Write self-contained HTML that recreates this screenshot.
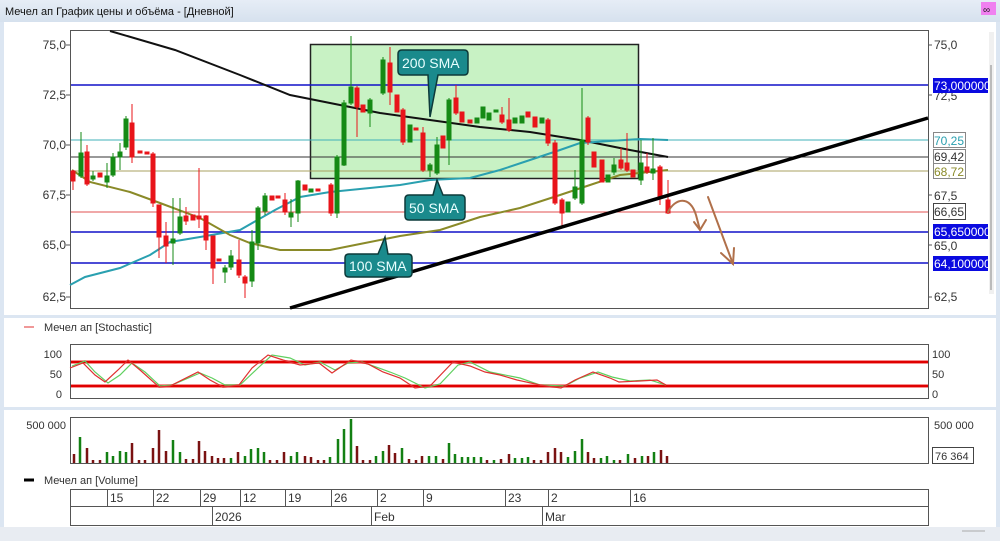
<!DOCTYPE html>
<html><head><meta charset="utf-8"><style>
html,body{margin:0;padding:0;width:1000px;height:541px;overflow:hidden;background:#fff;font-family:"Liberation Sans","DejaVu Sans",sans-serif}
</style></head><body>
<svg width="1000" height="541" viewBox="0 0 1000 541" xmlns="http://www.w3.org/2000/svg" font-family="Liberation Sans, DejaVu Sans, sans-serif">
<defs><linearGradient id="tb" x1="0" y1="0" x2="0" y2="1"><stop offset="0" stop-color="#e6edf6"/><stop offset="1" stop-color="#d6e1ee"/></linearGradient></defs>
<rect x="0" y="0" width="1000" height="541" fill="#dce6f2"/>
<rect x="0" y="0" width="1000" height="22" fill="url(#tb)"/>
<text x="5" y="15" font-size="11" fill="#111">Мечел ап График цены и объёма - [Дневной]</text>
<rect x="981" y="2" width="15" height="13" fill="#f080f0"/>
<text x="983" y="13" font-size="10" fill="#222">&#x221E;</text>
<rect x="4" y="22" width="992" height="505" fill="#fff"/>
<rect x="0" y="527" width="1000" height="14" fill="#e8ecf2"/>
<line x1="962" y1="531" x2="985" y2="531" stroke="#aaa"/>

<!-- main plot frame -->
<rect x="70.5" y="30.5" width="858" height="278" fill="#fff" stroke="#555"/>
<rect x="310.5" y="44.5" width="328" height="134" fill="#c8f2c4" stroke="#222" stroke-width="1.5"/>
<!-- horizontal levels -->
<g stroke-width="1.5">
<line x1="71" y1="85" x2="928" y2="85" stroke="#1010c8"/>
<line x1="71" y1="140" x2="928" y2="140" stroke="#40b0b8" stroke-width="1"/>
<line x1="71" y1="157" x2="928" y2="157" stroke="#333" stroke-width="1"/>
<line x1="71" y1="171" x2="928" y2="171" stroke="#a8a060" stroke-width="1"/>
<line x1="71" y1="212" x2="928" y2="212" stroke="#e05050" stroke-width="1"/>
<line x1="71" y1="232" x2="928" y2="232" stroke="#1010c8"/>
<line x1="71" y1="263" x2="928" y2="263" stroke="#1010c8"/>
</g>
<!-- MAs -->
<polyline fill="none" stroke="#111" stroke-width="2" points="110,31 175,50 240,75 290,95 330,103 380,113 430,120 480,127 530,132 580,140 630,150 668,157"/>
<polyline fill="none" stroke="#2aa0b0" stroke-width="2" points="70,285 85,277 120,268 150,255 170,242 200,237 240,230 275,210 300,197 330,192 370,188 400,185 430,180 470,178 500,170 530,160 560,150 580,143 610,141 640,139 668,140"/>
<polyline fill="none" stroke="#8a8a28" stroke-width="2" points="72,170 90,182 130,192 160,203 200,218 230,235 250,243 280,250 330,250 360,244 400,236 440,230 480,217 520,208 560,195 590,185 620,175 668,170"/>

<!-- candles -->
<g stroke-width="1">
<g stroke="#e8141a" fill="#e8141a">
<line x1="73" y1="170" x2="73" y2="190"/><rect x="71" y="171" width="4" height="10"/>
<line x1="87" y1="145" x2="87" y2="186"/><rect x="85" y="152" width="4" height="32"/>
<rect x="98" y="173" width="4" height="4"/>
<line x1="132" y1="104" x2="132" y2="163"/><rect x="130" y="123" width="4" height="34"/>
<rect x="138" y="151" width="4" height="2"/><rect x="145" y="152" width="4" height="2"/>
<line x1="153" y1="152" x2="153" y2="207"/><rect x="151" y="154" width="4" height="49"/>
<line x1="159" y1="205" x2="159" y2="258"/><rect x="157" y="205" width="4" height="32"/>
<line x1="166" y1="222" x2="166" y2="263"/><rect x="164" y="236" width="4" height="10"/>
<line x1="186" y1="207" x2="186" y2="225"/><rect x="184" y="216" width="4" height="5"/>
<rect x="191" y="215" width="4" height="5"/>
<line x1="199" y1="168" x2="199" y2="228"/><rect x="197" y="216" width="4" height="3"/>
<line x1="206" y1="215" x2="206" y2="250"/><rect x="204" y="216" width="4" height="24"/>
<line x1="213" y1="236" x2="213" y2="284"/><rect x="211" y="236" width="4" height="32"/>
<rect x="217" y="259" width="4" height="2"/>
<line x1="239" y1="240" x2="239" y2="278"/><rect x="237" y="260" width="4" height="15"/>
<line x1="245" y1="275" x2="245" y2="298"/><rect x="243" y="277" width="4" height="6"/>
<rect x="270" y="196" width="4" height="4"/><rect x="276" y="196" width="4" height="2"/>
<line x1="285" y1="193" x2="285" y2="215"/><rect x="283" y="200" width="4" height="12"/>
<rect x="303" y="185" width="4" height="5"/><rect x="316" y="189" width="4" height="2"/>
<line x1="331" y1="183" x2="331" y2="216"/><rect x="329" y="185" width="4" height="28"/>
<line x1="357" y1="86" x2="357" y2="137"/><rect x="355" y="88" width="4" height="19"/>
<rect x="361" y="105" width="4" height="7"/>
<line x1="390" y1="47" x2="390" y2="105"/><rect x="388" y="63" width="4" height="29"/>
<rect x="395" y="95" width="4" height="17"/>
<line x1="403" y1="108" x2="403" y2="145"/><rect x="401" y="110" width="4" height="32"/>
<rect x="414" y="128" width="4" height="2"/>
<line x1="423" y1="127" x2="423" y2="172"/><rect x="421" y="133" width="4" height="37"/>
<rect x="441" y="136" width="4" height="12"/>
<line x1="456" y1="85" x2="456" y2="115"/><rect x="454" y="98" width="4" height="15"/>
<rect x="460" y="112" width="4" height="10"/><rect x="468" y="120" width="4" height="3"/>
<line x1="502" y1="107" x2="502" y2="124"/><rect x="500" y="115" width="4" height="7"/>
<line x1="509" y1="98" x2="509" y2="132"/><rect x="507" y="120" width="4" height="10"/>
<rect x="526" y="112" width="4" height="5"/><rect x="533" y="117" width="4" height="10"/>
<line x1="548" y1="118" x2="548" y2="146"/><rect x="546" y="120" width="4" height="23"/>
<line x1="555" y1="140" x2="555" y2="205"/><rect x="553" y="143" width="4" height="60"/>
<line x1="562" y1="198" x2="562" y2="227"/><rect x="560" y="200" width="4" height="13"/>
<line x1="588" y1="116" x2="588" y2="145"/><rect x="586" y="118" width="4" height="24"/>
<rect x="592" y="152" width="4" height="15"/>
<rect x="600" y="160" width="4" height="22"/>
<line x1="621" y1="148" x2="621" y2="170"/><rect x="619" y="160" width="4" height="8"/>
<line x1="627" y1="133" x2="627" y2="172"/><rect x="625" y="163" width="4" height="7"/>
<rect x="631" y="170" width="4" height="7"/>
<line x1="647" y1="153" x2="647" y2="174"/><rect x="645" y="167" width="4" height="5"/>
<line x1="660" y1="165" x2="660" y2="205"/><rect x="658" y="167" width="4" height="30"/>
<line x1="668" y1="180" x2="668" y2="214"/><rect x="666" y="200" width="4" height="13"/>
</g>
<g stroke="#158a15" fill="#158a15">
<line x1="81" y1="132" x2="81" y2="178"/><rect x="79" y="153" width="4" height="23"/>
<line x1="93" y1="171" x2="93" y2="181"/><rect x="91" y="176" width="4" height="3"/>
<line x1="107" y1="163" x2="107" y2="188"/><rect x="105" y="176" width="4" height="6"/>
<line x1="113" y1="153" x2="113" y2="177"/><rect x="111" y="157" width="4" height="18"/>
<line x1="120" y1="143" x2="120" y2="170"/><rect x="118" y="152" width="4" height="5"/>
<line x1="126" y1="116" x2="126" y2="150"/><rect x="124" y="119" width="4" height="28"/>
<line x1="173" y1="198" x2="173" y2="265"/><rect x="171" y="239" width="4" height="4"/>
<line x1="180" y1="198" x2="180" y2="235"/><rect x="178" y="217" width="4" height="16"/>
<line x1="225" y1="265" x2="225" y2="283"/><rect x="223" y="268" width="4" height="4"/>
<line x1="231" y1="250" x2="231" y2="270"/><rect x="229" y="256" width="4" height="11"/>
<line x1="252" y1="230" x2="252" y2="287"/><rect x="250" y="242" width="4" height="39"/>
<line x1="258" y1="206" x2="258" y2="250"/><rect x="256" y="208" width="4" height="35"/>
<line x1="265" y1="193" x2="265" y2="215"/><rect x="263" y="196" width="4" height="15"/>
<line x1="291" y1="199" x2="291" y2="227"/><rect x="289" y="213" width="4" height="4"/>
<line x1="298" y1="180" x2="298" y2="222"/><rect x="296" y="181" width="4" height="32"/>
<rect x="309" y="189" width="4" height="3"/>
<line x1="337" y1="155" x2="337" y2="218"/><rect x="335" y="157" width="4" height="56"/>
<line x1="344" y1="100" x2="344" y2="166"/><rect x="342" y="103" width="4" height="62"/>
<line x1="351" y1="36" x2="351" y2="105"/><rect x="349" y="87" width="4" height="16"/>
<line x1="370" y1="98" x2="370" y2="127"/><rect x="368" y="100" width="4" height="13"/>
<line x1="383" y1="57" x2="383" y2="95"/><rect x="381" y="60" width="4" height="33"/>
<rect x="408" y="125" width="4" height="17"/>
<line x1="430" y1="163" x2="430" y2="177"/><rect x="428" y="165" width="4" height="5"/>
<line x1="437" y1="137" x2="437" y2="175"/><rect x="435" y="145" width="4" height="28"/>
<line x1="449" y1="98" x2="449" y2="165"/><rect x="447" y="100" width="4" height="40"/>
<rect x="475" y="118" width="4" height="5"/><rect x="481" y="107" width="4" height="11"/>
<rect x="487" y="113" width="4" height="7"/><rect x="494" y="110" width="4" height="2"/>
<rect x="513" y="118" width="4" height="5"/><rect x="520" y="116" width="4" height="7"/>
<rect x="540" y="118" width="4" height="5"/>
<rect x="566" y="202" width="4" height="10"/>
<line x1="575" y1="170" x2="575" y2="200"/><rect x="573" y="187" width="4" height="11"/>
<line x1="582" y1="88" x2="582" y2="205"/><rect x="580" y="140" width="4" height="63"/>
<rect x="606" y="175" width="4" height="7"/>
<line x1="614" y1="158" x2="614" y2="175"/><rect x="612" y="165" width="4" height="7"/>
<line x1="641" y1="140" x2="641" y2="185"/><rect x="639" y="163" width="4" height="17"/>
<line x1="653" y1="138" x2="653" y2="180"/><rect x="651" y="169" width="4" height="4"/>
</g>
</g>
<!-- trend line -->
<line x1="290" y1="308" x2="928" y2="118" stroke="#000" stroke-width="3.5"/>
<!-- brown arrows -->
<g fill="none" stroke="#b0704a" stroke-width="2" stroke-linecap="round">
<path d="M668,212 C675,198 690,195 696,215 L700,230"/>
<path d="M694,222 L700,230 L706,220"/>
<path d="M708,197 L733,264"/>
<path d="M721,253 L733,264 L734,248"/>
</g>
<!-- callouts -->
<g fill="#1a8a8c" stroke="#0d3a3a" stroke-width="1.5">
<path d="M402,50 H464 Q468,50 468,54 V71 Q468,75 464,75 H438 L430,117 L428,75 H402 Q398,75 398,71 V54 Q398,50 402,50 Z"/>
<path d="M409,195 H433 L437,180 L443,195 H461 Q465,195 465,199 V216 Q465,220 461,220 H409 Q405,220 405,216 V199 Q405,195 409,195 Z"/>
<path d="M349,254 H378 L385,237 L388,254 H408 Q412,254 412,258 V273 Q412,277 408,277 H349 Q345,277 345,273 V258 Q345,254 349,254 Z"/>
</g>
<g fill="#e8ffff" font-size="14"><text x="402" y="68">200 SMA</text><text x="409" y="213">50 SMA</text><text x="349" y="271">100 SMA</text></g>

<!-- left axis -->
<g font-size="12" fill="#333" text-anchor="end">
<text x="66" y="49">75,0</text><text x="66" y="99">72,5</text><text x="66" y="149">70,0</text><text x="66" y="199">67,5</text><text x="66" y="249">65,0</text><text x="66" y="301">62,5</text>
</g>
<g stroke="#555"><line x1="66" y1="45" x2="70" y2="45"/><line x1="66" y1="95" x2="70" y2="95"/><line x1="66" y1="145" x2="70" y2="145"/><line x1="66" y1="195" x2="70" y2="195"/><line x1="66" y1="245" x2="70" y2="245"/><line x1="66" y1="297" x2="70" y2="297"/>
<line x1="928" y1="45" x2="932" y2="45"/><line x1="928" y1="95" x2="932" y2="95"/><line x1="928" y1="195" x2="932" y2="195"/><line x1="928" y1="245" x2="932" y2="245"/><line x1="928" y1="297" x2="932" y2="297"/></g>
<!-- right axis -->
<g font-size="12" fill="#333">
<text x="934" y="49">75,0</text><text x="934" y="100">72,5</text><text x="934" y="200">67,5</text><text x="934" y="250">65,0</text><text x="934" y="301">62,5</text>
</g>
<rect x="933" y="78" width="55" height="15" fill="#0a0ae0"/><text x="934" y="90" font-size="12" fill="#fff">73,000000</text>
<rect x="933" y="224" width="55" height="15" fill="#0a0ae0"/><text x="934" y="236" font-size="12" fill="#fff">65,650000</text>
<rect x="933" y="256" width="55" height="15" fill="#0a0ae0"/><text x="934" y="268" font-size="12" fill="#fff">64,100000</text>
<rect x="933.5" y="132.5" width="32" height="15" fill="#fff" stroke="#888"/><text x="934" y="145" font-size="12" fill="#2aa0b0">70,25</text>
<rect x="933.5" y="149.5" width="32" height="14" fill="#fff" stroke="#888"/><text x="934" y="161" font-size="12" fill="#333">69,42</text>
<rect x="933.5" y="163.5" width="32" height="15" fill="#fff" stroke="#888"/><text x="934" y="176" font-size="12" fill="#8a8a28">68,72</text>
<rect x="933.5" y="203.5" width="32" height="16" fill="#fff" stroke="#444"/><text x="934" y="216" font-size="12" fill="#333">66,65</text>
<rect x="989" y="32" width="5" height="262" fill="#f0f0f0"/><line x1="991" y1="65" x2="991" y2="290" stroke="#bbb" stroke-width="2"/>

<!-- separator -->
<rect x="4" y="315" width="992" height="3" fill="#dce6f2"/>
<line x1="24" y1="327" x2="34" y2="327" stroke="#e03030"/>
<text x="44" y="331" font-size="11" fill="#333">Мечел ап [Stochastic]</text>
<rect x="70.5" y="344.5" width="858" height="54" fill="#fff" stroke="#555"/>
<rect x="71" y="360" width="857" height="4" fill="#f59090"/><line x1="71" y1="362" x2="928" y2="362" stroke="#e00000" stroke-width="2"/>
<rect x="71" y="384" width="857" height="4" fill="#f59090"/><line x1="71" y1="386" x2="928" y2="386" stroke="#e00000" stroke-width="2"/>
<polyline fill="none" stroke="#60d060" stroke-width="1.2" points="72,366 85,361 95,372 108,383 120,375 132,363 145,372 160,386 172,385 200,373 212,378 225,385 240,385 258,368 272,355 290,358 305,365 320,362 335,370 348,363 362,362 390,372 405,378 425,388 440,384 458,365 470,362 490,372 520,378 540,385 565,386 580,378 598,372 612,377 630,381 650,380 666,385"/>
<polyline fill="none" stroke="#e03030" stroke-width="1.2" points="70,368 83,363 95,375 105,382 118,370 128,360 140,370 159,387 170,386 198,372 210,380 223,387 239,385 252,368 268,355 283,360 300,365 319,363 332,373 351,360 368,364 383,372 400,378 415,388 430,386 453,362 470,366 485,372 500,375 517,380 540,385 561,388 575,380 593,372 610,378 619,382 640,381 657,380 666,385"/>
<g font-size="11" fill="#333"><text x="62" y="358" text-anchor="end">100</text><text x="62" y="378" text-anchor="end">50</text><text x="62" y="398" text-anchor="end">0</text>
<text x="932" y="358">100</text><text x="932" y="378">50</text><text x="932" y="398">0</text></g>

<rect x="4" y="407" width="992" height="3" fill="#dce6f2"/>
<rect x="70.5" y="417.5" width="858" height="46" fill="#fff" stroke="#555"/>
<g font-size="11" fill="#333"><text x="66" y="429" text-anchor="end">500 000</text><text x="934" y="429">500 000</text></g>
<rect x="932.5" y="447.5" width="41" height="16" fill="#fff" stroke="#444"/><text x="935" y="460" font-size="11" fill="#333">76 364</text>
<!-- volume -->
<g stroke-width="2.5">
<g stroke="#7a1212">
<line x1="74" y1="463" x2="74" y2="454"/><line x1="87" y1="463" x2="87" y2="448"/><line x1="93" y1="463" x2="93" y2="460"/><line x1="100" y1="463" x2="100" y2="460"/><line x1="132" y1="463" x2="132" y2="443"/><line x1="139" y1="463" x2="139" y2="460"/><line x1="145" y1="463" x2="145" y2="460"/><line x1="153" y1="463" x2="153" y2="448"/><line x1="159" y1="463" x2="159" y2="430"/><line x1="166" y1="463" x2="166" y2="451"/><line x1="186" y1="463" x2="186" y2="459"/><line x1="193" y1="463" x2="193" y2="459"/><line x1="199" y1="463" x2="199" y2="441"/><line x1="205" y1="463" x2="205" y2="451"/><line x1="212" y1="463" x2="212" y2="456"/><line x1="218" y1="463" x2="218" y2="458"/><line x1="224" y1="463" x2="224" y2="458"/><line x1="238" y1="463" x2="238" y2="452"/><line x1="270" y1="463" x2="270" y2="460"/><line x1="277" y1="463" x2="277" y2="460"/><line x1="284" y1="463" x2="284" y2="452"/><line x1="305" y1="463" x2="305" y2="456"/><line x1="311" y1="463" x2="311" y2="457"/><line x1="318" y1="463" x2="318" y2="460"/><line x1="324" y1="463" x2="324" y2="460"/><line x1="357" y1="463" x2="357" y2="446"/><line x1="363" y1="463" x2="363" y2="460"/><line x1="370" y1="463" x2="370" y2="460"/><line x1="389" y1="463" x2="389" y2="445"/><line x1="395" y1="463" x2="395" y2="453"/><line x1="409" y1="463" x2="409" y2="459"/><line x1="416" y1="463" x2="416" y2="460"/><line x1="422" y1="463" x2="422" y2="456"/><line x1="443" y1="463" x2="443" y2="459"/><line x1="487" y1="463" x2="487" y2="460"/><line x1="501" y1="463" x2="501" y2="459"/><line x1="509" y1="463" x2="509" y2="454"/><line x1="534" y1="463" x2="534" y2="460"/><line x1="541" y1="463" x2="541" y2="460"/><line x1="548" y1="463" x2="548" y2="452"/><line x1="555" y1="463" x2="555" y2="448"/><line x1="561" y1="463" x2="561" y2="452"/><line x1="588" y1="463" x2="588" y2="452"/><line x1="594" y1="463" x2="594" y2="458"/><line x1="620" y1="463" x2="620" y2="460"/><line x1="635" y1="463" x2="635" y2="458"/><line x1="648" y1="463" x2="648" y2="456"/><line x1="661" y1="463" x2="661" y2="450"/><line x1="667" y1="463" x2="667" y2="456"/>
</g>
<g stroke="#138013">
<line x1="80" y1="463" x2="80" y2="437"/><line x1="107" y1="463" x2="107" y2="452"/><line x1="113" y1="463" x2="113" y2="456"/><line x1="120" y1="463" x2="120" y2="451"/><line x1="126" y1="463" x2="126" y2="452"/><line x1="173" y1="463" x2="173" y2="440"/><line x1="180" y1="463" x2="180" y2="452"/><line x1="231" y1="463" x2="231" y2="458"/><line x1="245" y1="463" x2="245" y2="456"/><line x1="251" y1="463" x2="251" y2="449"/><line x1="258" y1="463" x2="258" y2="448"/><line x1="264" y1="463" x2="264" y2="452"/><line x1="291" y1="463" x2="291" y2="456"/><line x1="297" y1="463" x2="297" y2="452"/><line x1="330" y1="463" x2="330" y2="457"/><line x1="338" y1="463" x2="338" y2="439"/><line x1="344" y1="463" x2="344" y2="429"/><line x1="351" y1="463" x2="351" y2="419"/><line x1="376" y1="463" x2="376" y2="456"/><line x1="383" y1="463" x2="383" y2="451"/><line x1="402" y1="463" x2="402" y2="448"/><line x1="429" y1="463" x2="429" y2="456"/><line x1="436" y1="463" x2="436" y2="456"/><line x1="449" y1="463" x2="449" y2="443"/><line x1="455" y1="463" x2="455" y2="454"/><line x1="462" y1="463" x2="462" y2="457"/><line x1="468" y1="463" x2="468" y2="457"/><line x1="474" y1="463" x2="474" y2="457"/><line x1="481" y1="463" x2="481" y2="457"/><line x1="494" y1="463" x2="494" y2="460"/><line x1="515" y1="463" x2="515" y2="458"/><line x1="522" y1="463" x2="522" y2="458"/><line x1="528" y1="463" x2="528" y2="457"/><line x1="568" y1="463" x2="568" y2="457"/><line x1="575" y1="463" x2="575" y2="451"/><line x1="582" y1="463" x2="582" y2="439"/><line x1="601" y1="463" x2="601" y2="458"/><line x1="607" y1="463" x2="607" y2="456"/><line x1="614" y1="463" x2="614" y2="460"/><line x1="628" y1="463" x2="628" y2="454"/><line x1="642" y1="463" x2="642" y2="456"/><line x1="654" y1="463" x2="654" y2="452"/>
</g>
</g>

<line x1="24" y1="480" x2="34" y2="480" stroke="#000" stroke-width="3"/>
<text x="44" y="484" font-size="11" fill="#333">Мечел ап [Volume]</text>
<!-- time axis -->
<g stroke="#555" fill="none">
<rect x="70.5" y="489.5" width="858" height="36"/>
<line x1="70" y1="506.5" x2="928" y2="506.5"/>
<line x1="107.5" y1="490" x2="107.5" y2="506"/><line x1="153.5" y1="490" x2="153.5" y2="506"/><line x1="200.5" y1="490" x2="200.5" y2="506"/><line x1="240.5" y1="490" x2="240.5" y2="506"/><line x1="285.5" y1="490" x2="285.5" y2="506"/><line x1="331.5" y1="490" x2="331.5" y2="506"/><line x1="377.5" y1="490" x2="377.5" y2="506"/><line x1="423.5" y1="490" x2="423.5" y2="506"/><line x1="505.5" y1="490" x2="505.5" y2="506"/><line x1="548.5" y1="490" x2="548.5" y2="506"/><line x1="630.5" y1="490" x2="630.5" y2="506"/>
<line x1="212.5" y1="507" x2="212.5" y2="525"/><line x1="371.5" y1="507" x2="371.5" y2="525"/><line x1="542.5" y1="507" x2="542.5" y2="525"/>
</g>
<g font-size="12" fill="#333">
<text x="110" y="502">15</text><text x="156" y="502">22</text><text x="203" y="502">29</text><text x="243" y="502">12</text><text x="288" y="502">19</text><text x="334" y="502">26</text><text x="380" y="502">2</text><text x="426" y="502">9</text><text x="508" y="502">23</text><text x="551" y="502">2</text><text x="633" y="502">16</text>
<text x="215" y="521">2026</text><text x="374" y="521">Feb</text><text x="545" y="521">Mar</text>
</g>
</svg>
</body></html>
